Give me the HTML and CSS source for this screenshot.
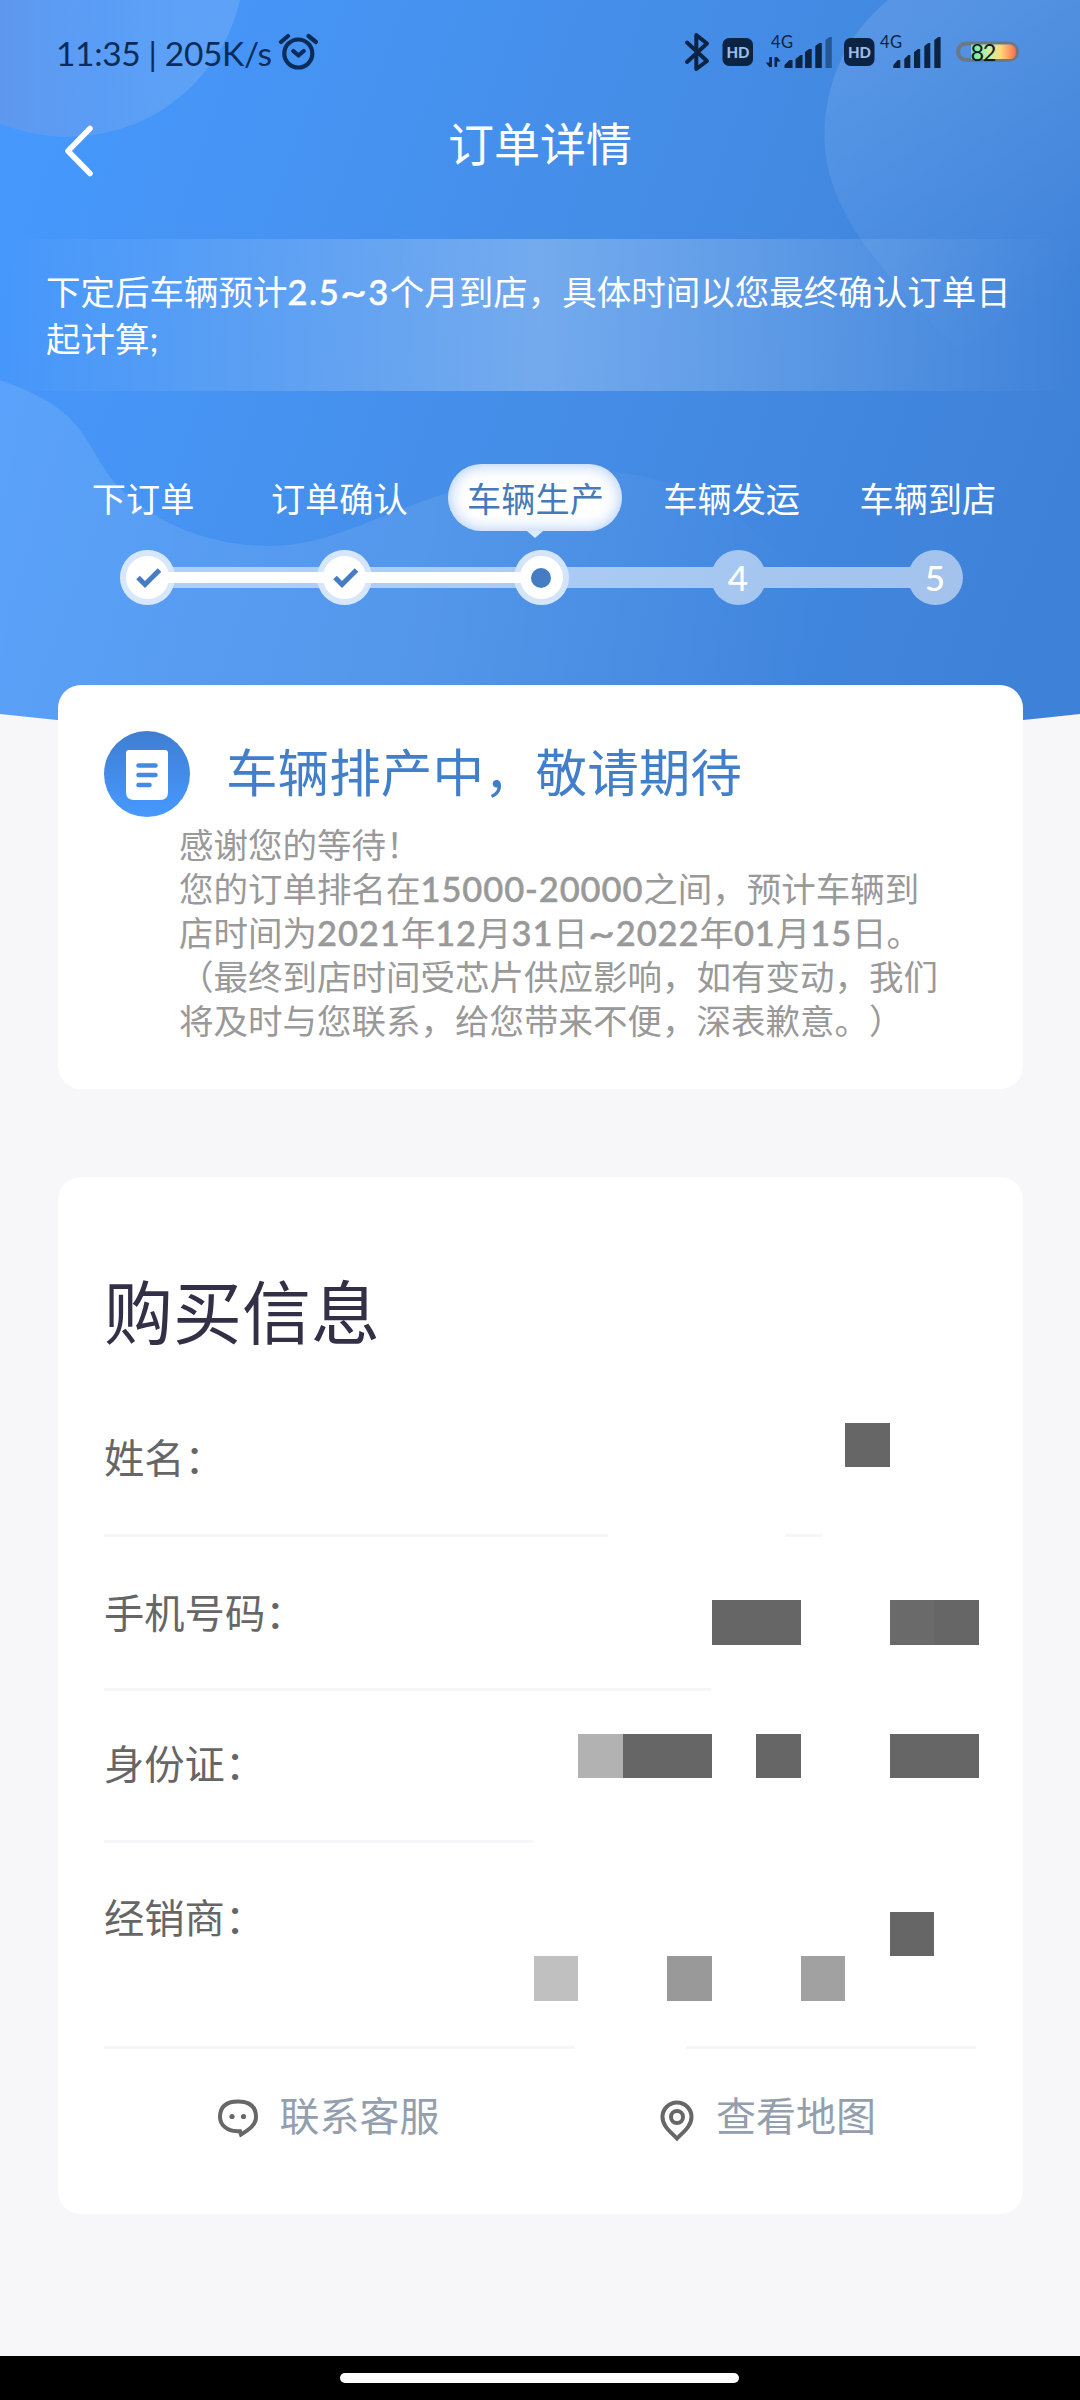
FILE: index.html
```html
<!DOCTYPE html>
<html lang="zh-CN">
<head>
<meta charset="utf-8">
<title>订单详情</title>
<link rel="stylesheet" href="styles.css">
</head>
<body>
<div class="screen">
  <svg class="backdrop" width="1080" height="740" viewBox="0 0 1080 740" aria-hidden="true">
    <defs>
      <linearGradient id="sky" gradientUnits="userSpaceOnUse" x1="0" y1="180" x2="1040" y2="560">
        <stop offset="0" stop-color="#4698fd"/><stop offset=".5" stop-color="#458ee8"/><stop offset="1" stop-color="#3e81d8"/>
      </linearGradient>
      <linearGradient id="orb" x1="0" y1="0" x2="1" y2="0">
        <stop offset=".2" stop-color="#8d8ac8" stop-opacity=".36"/><stop offset=".6" stop-color="#a8b4e0" stop-opacity=".2"/><stop offset="1" stop-color="#fff" stop-opacity=".12"/>
      </linearGradient>
      <linearGradient id="blob" gradientUnits="userSpaceOnUse" x1="850" y1="60" x2="1010" y2="330">
        <stop offset="0" stop-color="#fff" stop-opacity=".11"/><stop offset="1" stop-color="#fff" stop-opacity="0"/>
      </linearGradient>
      <linearGradient id="wave" gradientUnits="userSpaceOnUse" x1="0" y1="500" x2="820" y2="600">
        <stop offset="0" stop-color="#fff" stop-opacity=".11"/><stop offset=".5" stop-color="#fff" stop-opacity=".08"/><stop offset="1" stop-color="#fff" stop-opacity="0"/>
      </linearGradient>
      <clipPath id="hero"><path d="M0 0H1080V714Q540 774 0 714Z"/></clipPath>
    </defs>
    <g clip-path="url(#hero)">
      <rect width="1080" height="740" fill="url(#sky)"/>
      <circle cx="68" cy="-39.5" r="176.5" fill="url(#orb)"/>
      <path d="M888 0C845 35 824 85 824.500 138C826 205 870 258 939 330C990 380 1040 425 1080 495V0Z" fill="url(#blob)"/>
      <path d="M0 380C90 412 80 440 115 483C150 522 210 546 268 546C330 546 375 515 448 493C520 472 570 466 623 473C720 488 745 527 781 553C830 600 870 640 919 690V740H0Z" fill="url(#wave)"/>
    </g>
  </svg>

  <header class="statusbar">
    <span class="clock">11:35 | 205K/s</span>
    <svg class="alarm" width="40" height="40" viewBox="278 32 40 40" fill="none" stroke="#0a2c59" stroke-width="4.200" stroke-linecap="round" stroke-linejoin="round">
      <circle cx="298.300" cy="53.500" r="14"/><path d="M293.300 51l5.200 4.500 5.200-4.500M281 42l7-6M308.500 36l7.500 6"/>
    </svg>
    <svg class="signals" width="340" height="44" viewBox="682 30 340 44">
      <defs><linearGradient id="cell"><stop offset="0" stop-color="#6be8a0"/><stop offset=".4" stop-color="#c9eea6"/><stop offset=".65" stop-color="#ffd97a"/><stop offset="1" stop-color="#fb6d4c"/></linearGradient></defs>
      <path d="M687 42.500L707 61L696.300 69V35L707 43.500L687 62" fill="none" stroke="#0c2444" stroke-width="4" stroke-linejoin="round" stroke-linecap="round"/>
      <g fill="#0c2444">
        <rect x="722.500" y="38" width="30.500" height="28" rx="6.500"/>
        <rect x="844" y="38" width="30.500" height="28" rx="6.500"/>
        <path d="M769.300 57h2.600v10h-2.600l-3.500-4.500h3.500zM774.500 67v-10h2.600l3.500 4.500h-3.500v5.500z"/>
        <path d="M784.500 68v-3l5-5h3v8zM795.500 68v-9l5-4h2v13zM805 68v-16l4-3h2.700v19zM815.300 68v-22l4-3h2.500v25z"/>
        <path opacity=".5" d="M825.500 68v-28l4-3h2.300v31z"/>
        <path d="M893.300 68v-3l4.500-5h2.500v8zM904.300 68v-9l4-4h2v13zM914 68v-16l4-3h2.200v19zM924.300 68v-22l4-3h2v25zM934.300 68v-28l4-3h2.300v31z"/>
      </g>
      <g class="badge"><text x="726.500" y="57.500" textLength="23" lengthAdjust="spacingAndGlyphs">HD</text><text x="848" y="57.500" textLength="23" lengthAdjust="spacingAndGlyphs">HD</text></g>
      <g class="network"><text x="771" y="47.500" textLength="22">4G</text><text x="880" y="47.500" textLength="22">4G</text></g>
      <rect x="958" y="43.500" width="59" height="16.500" rx="8.250" fill="none" stroke="#6c7885" stroke-width="4"/>
      <path d="M971 44.500h39q6 1 6 7.500t-6 7h-39z" fill="url(#cell)"/>
      <text class="charge" x="970.500" y="60.500" textLength="26">82</text>
    </svg>
  </header>

  <nav class="navbar">
    <svg class="back" width="30" height="54" viewBox="0 0 30 54" fill="none" stroke="#fff" stroke-width="5.500" stroke-linecap="round" stroke-linejoin="round"><path d="M26 4.500L4 27l22 22.500"/></svg>
    <h1 class="title">订单详情</h1>
  </nav>

  <p class="notice">下定后车辆预计<span class="num">2.5<span class="tilde">~</span>3</span>个月到店，具体时间以您最终确认订单日起计算;</p>

  <section class="progress">
    <ol class="labels">
      <li>下订单</li><li>订单确认</li><li class="current"><span class="bubble">车辆生产</span></li><li>车辆发运</li><li>车辆到店</li>
    </ol>
    <div class="track">
      <div class="rail"><i></i><i></i><i></i><i></i><i></i></div>
      <div class="fill"></div>
      <div class="nodes">
        <span class="node done"><svg width="26" height="22" viewBox="0 0 26 22" fill="none" stroke="#447dc4" stroke-width="5"><path d="M2 10.500l7 7L23.500 3"/></svg></span>
        <span class="node done"><svg width="26" height="22" viewBox="0 0 26 22" fill="none" stroke="#447dc4" stroke-width="5"><path d="M2 10.500l7 7L23.500 3"/></svg></span>
        <span class="node done"><b class="dot"></b></span>
        <span class="node">4</span>
        <span class="node">5</span>
      </div>
    </div>
  </section>

  <section class="card state">
    <div class="state-head">
      <svg width="86" height="86" viewBox="0 0 86 86">
        <defs><linearGradient id="disc" x1="0" y1="0" x2="0" y2="1"><stop offset="0" stop-color="#3f7ed2"/><stop offset="1" stop-color="#4699ff"/></linearGradient></defs>
        <circle cx="43" cy="43" r="43" fill="url(#disc)"/>
        <path d="M25 19h36q3 0 3 3v39q0 8-8 8H30q-8 0-8-8V22q0-3 3-3z" fill="#fff"/>
        <path d="M34.500 34.500h17M34.500 44h17M34.500 54h11" stroke="#4489e2" stroke-width="4.500" stroke-linecap="round"/>
      </svg>
      <h2 class="state-title">车辆排产中，敬请期待</h2>
    </div>
    <p class="state-text">感谢您的等待！<br>您的订单排名在<span class="num">15000-20000</span>之间，预计车辆到<br>店时间为<span class="num">2021</span>年<span class="num">12</span>月<span class="num">31</span>日<span class="num"><span class="tilde">~</span>2022</span>年<span class="num">01</span>月<span class="num">15</span>日。<br>（最终到店时间受芯片供应影响，如有变动，我们<br>将及时与您联系，给您带来不便，深表歉意。）</p>
  </section>

  <section class="card purchase">
    <h2 class="purchase-title">购买信息</h2>
    <div class="row name">姓名：</div>
    <div class="row phone">手机号码：</div>
    <div class="row idcard">身份证：</div>
    <div class="row dealer">经销商：</div>
    <div class="actions">
      <a class="action"><svg width="42" height="42" viewBox="0 0 42 42" fill="none" stroke="#676767" stroke-width="4"><path d="M23 34.300H20C10 34 3 28 3 20 3 10 9 4.500 21 4.500S39 10 39 20c0 8-7 12.500-15 17.500z"/><circle cx="15" cy="19.500" r="2.600" fill="#676767" stroke="none"/><circle cx="26.500" cy="19.500" r="2.600" fill="#676767" stroke="none"/></svg>联系客服</a>
      <a class="action map"><svg width="34" height="42" viewBox="0 0 34 42" fill="none" stroke="#676767" stroke-width="4"><path d="M17 38.500C11 32 2.500 26.500 2.500 17a14.500 14.500 0 0 1 29 0c0 9.500-8.500 15-14.500 21.500z"/><circle cx="17" cy="17" r="6"/></svg>查看地图</a>
    </div>
    <div class="mosaic" aria-hidden="true">
      <i class="m1"></i><i class="m2"></i><i class="m3"></i><i class="m4"></i><i class="m5"></i><i class="m6"></i><i class="m7"></i><i class="m8"></i><i class="m9"></i><i class="m10"></i><i class="m11"></i><i class="m12"></i>
    </div>
  </section>

  <footer class="homebar"><span></span></footer>
</div>
</body>
</html>
```
FILE: styles.css
```css
* { box-sizing: border-box; margin: 0; padding: 0; }
body { background: #f7f7f9; font-family: Lato, "Noto Sans CJK SC", sans-serif; font-weight: 400; text-spacing-trim: space-all; }
svg { display: block; flex: none; }
.screen { position: relative; display: flex; flex-direction: column; width: 1080px; height: 2400px; overflow: hidden; isolation: isolate; }
.backdrop { position: absolute; left: 0; top: 0; z-index: -1; }

.statusbar { display: flex; align-items: flex-start; height: 100px; padding: 30px 58px 0 56px; }
.clock { width: 218px; margin-right: 4px; font-size: 33.500px; letter-spacing: -.35px; line-height: 46px; white-space: nowrap; color: #0a2c59; }
.alarm { margin-top: 2px; }
.signals { margin-left: auto; }
.badge text { font: 900 15px Lato, sans-serif; fill: #9cbce6; }
.network text { font: 400 16.500px Lato, sans-serif; fill: #0c2444; }
.charge { font: 400 23.500px Lato, sans-serif; fill: #101c28; }

.navbar { display: grid; grid-template-columns: 90px 1fr 90px; align-items: center; height: 100px; padding: 0 0 12px; }
.back { margin: 14px 0 0 64px; }
.title { font-size: 46px; line-height: 60px; font-weight: 400; text-align: center; color: #fff; }

.notice { height: 152px; margin-top: 39px; padding: 28.500px 66px 0 46px; font-size: 34.500px; line-height: 47.500px; color: #fff; word-break: break-all; background: linear-gradient(90deg, rgba(255,255,255,0), rgba(255,255,255,.25) 50%, rgba(255,255,255,0)); }
.num { font-weight: 500; letter-spacing: .9px; -webkit-text-stroke: .5px currentColor; }
.notice .num { letter-spacing: 1.500px; }
.num .tilde { display: inline-block; width: 28px; letter-spacing: 0; transform: scaleX(1.35); transform-origin: 0 50%; }

.progress { height: 294px; padding: 73px 54px 0 45px; }
.labels { display: grid; grid-template-columns: repeat(5, 196.200px); list-style: none; text-align: center; font-size: 34.200px; line-height: 70px; color: #fff; white-space: nowrap; }
.labels li { display: flex; justify-content: center; height: 67px; }
.bubble { position: relative; width: 174px; height: 67px; border-radius: 34px; background: #fff; color: #447ab8; box-shadow: inset 0 0 16px rgba(70,140,240,.5); }
.bubble::after { content: ""; position: absolute; left: 79px; top: 67px; border: 8px solid transparent; border-top: 7px solid #dfebfc; border-bottom: 0; }
.track { display: grid; width: 843px; height: 55px; margin: 19px 0 0 74.500px; align-items: center; }
.track > * { grid-area: 1 / 1; }
.rail { display: flex; justify-content: space-between; opacity: .52; background: linear-gradient(#fff, #fff) center / 790px 21px no-repeat; }
.rail i { width: 55px; height: 55px; border-radius: 50%; background: #fff; }
.fill { z-index: 1; width: 394px; height: 11px; margin-left: 27px; background: #fff; }
.nodes { z-index: 2; display: flex; justify-content: space-between; }
.node { display: flex; align-items: center; justify-content: center; width: 55px; height: 55px; border-radius: 50%; font-size: 35px; line-height: 55px; font-weight: 500; color: #fff; }
.done { background: radial-gradient(circle, #fff 21px, rgba(255,255,255,.5) 22px); }
.done svg { margin-left: 4px; }
.dot { width: 20px; height: 20px; border-radius: 50%; background: #447dc4; }

.card { width: 965px; margin-left: 57.500px; border-radius: 23px; background: #fff; }
.state { height: 404px; padding: 46px 46.500px 0; }
.state-head { display: flex; gap: 36px; }
.state-title { font-size: 51.600px; line-height: 82px; font-weight: 400; color: #417fcb; }
.state-text { margin: 6px 0 0 75px; font-size: 34.500px; line-height: 44.100px; white-space: nowrap; color: #999; }

.purchase { position: relative; height: 1037px; margin-top: 88px; padding: 91px 46.500px 0; }
.purchase-title { font-size: 69px; line-height: 90px; font-weight: 400; color: #332f47; }
.row { font-size: 40.300px; line-height: 56px; color: #666; background-repeat: no-repeat; background-image: linear-gradient(#f6f6f8, #f6f6f8), linear-gradient(#f6f6f8, #f6f6f8); }
.name { height: 179px; padding-top: 71.500px; background-size: 504px 3px, 37px 3px; background-position: 0 100%, 681px 100%; }
.phone { height: 154px; padding-top: 48px; background-size: 607px 3px, 0 0; background-position: 0 100%; }
.idcard { height: 152px; padding-top: 44.500px; background-size: 429px 3px, 0 0; background-position: 0 100%; }
.dealer { height: 206px; padding-top: 46.500px; background-size: 471px 3px, 290px 3px; background-position: 0 100%, 582px 100%; }
.actions { display: flex; padding-top: 39px; }
.action { display: flex; width: 443px; padding-left: 113px; gap: 20.500px; font-size: 40px; line-height: 56px; color: #939eae; }
.action svg { margin-top: 8.500px; }
.map { width: 420px; gap: 22px; }
.map svg { margin-top: 12px; }

.mosaic { position: absolute; left: 476.500px; top: 245.500px; display: grid; grid-template-columns: repeat(10, 44.470px); grid-template-rows: repeat(13, 44.470px); }
.mosaic i { background: #666; }
.m1 { grid-area: 1 / 8; }
.m2 { grid-area: 5 / 5 / 6 / 7; }
.mosaic .m3 { grid-area: 5 / 9; background: #6a6a6a; }
.m4 { grid-area: 5 / 10; }
.mosaic .m5 { grid-area: 8 / 2; background: #b2b2b2; }
.m6 { grid-area: 8 / 3 / 9 / 5; }
.m7 { grid-area: 8 / 6; }
.m8 { grid-area: 8 / 9 / 9 / 11; }
.m9 { grid-area: 12 / 9; }
.mosaic .m10 { grid-area: 13 / 1; background: #c0c0c0; }
.mosaic .m11 { grid-area: 13 / 4; background: #999; }
.mosaic .m12 { grid-area: 13 / 7; background: #a1a1a1; }

.homebar { display: flex; justify-content: center; height: 44px; margin-top: auto; padding: 17px 1px 0 0; background: #000; }
.homebar span { width: 399px; height: 10px; border-radius: 5px; background: #fff; }
```
